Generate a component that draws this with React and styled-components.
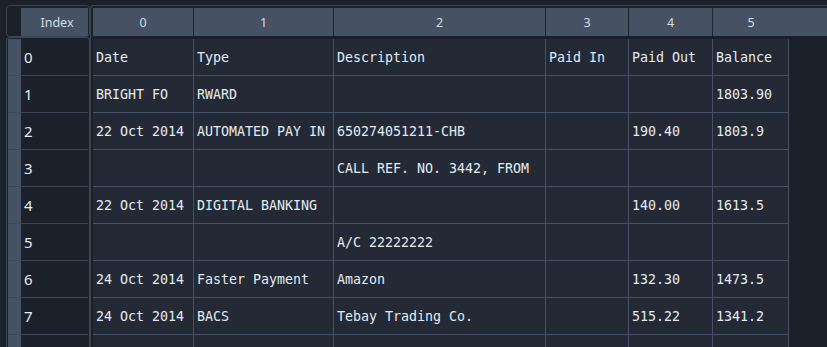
import React from "react"
import styled, { createGlobalStyle } from "styled-components"

const GlobalStyle = createGlobalStyle`
  html, body {
    margin: 0;
    padding: 0;
    background: #1b212b;
    overflow: hidden;
  }
`

const columns = [
  { label: "0", width: 101 },
  { label: "1", width: 140 },
  { label: "2", width: 212 },
  { label: "3", width: 83 },
  { label: "4", width: 84 },
  { label: "5", width: 76 },
]

const rows = [
  ["Date", "Type", "Description", "Paid In", "Paid Out", "Balance"],
  ["BRIGHT FO", "RWARD", "", "", "", "1803.90"],
  ["22 Oct 2014", "AUTOMATED PAY IN", "650274051211-CHB", "", "190.40", "1803.9"],
  ["", "", "CALL REF. NO. 3442, FROM", "", "", ""],
  ["22 Oct 2014", "DIGITAL BANKING", "", "", "140.00", "1613.5"],
  ["", "", "A/C 22222222", "", "", ""],
  ["24 Oct 2014", "Faster Payment", "Amazon", "", "132.30", "1473.5"],
  ["24 Oct 2014", "BACS", "Tebay Trading Co.", "", "515.22", "1341.2"],
  ["", "", "", "", "", ""],
]

// the last row only peeks in at the bottom edge, its number is out of view
const visibleIndexLabels = 8

const Page = styled.div`
  display: flex;
  padding: 5px 0 0 6px;
  height: 342px;
`

const LeftPanel = styled.div`
  display: flex;
  flex-direction: column;
  width: 84px;
  flex-shrink: 0;
`

const CornerBox = styled.div`
  box-sizing: border-box;
  height: 32px;
  border: 1px solid #3c4554;
  border-radius: 4px;
  padding: 2px 1px 0 14px;
`

const HeaderLabel = styled.div`
  height: 28px;
  padding-left: 5px;
  background: #465264;
  color: #d3dbe5;
  font-family: "Noto Sans", "Open Sans", sans-serif;
  font-size: 12.5px;
  display: flex;
  align-items: center;
  justify-content: center;
`

const IndexFrame = styled.div`
  box-sizing: border-box;
  flex: 1;
  border: 1px solid #3c4554;
  border-bottom: none;
  border-radius: 4px 4px 0 0;
  padding: 1px 1px 0 1px;
  overflow: hidden;
`

const IndexRow = styled.div`
  display: flex;
  height: 36px;
  border-bottom: 1px solid #3c4657;
`

const IndexStrip = styled.div`
  width: 13px;
  background: #465264;
`

const IndexCell = styled.div`
  flex: 1;
  display: flex;
  align-items: center;
  padding-left: 3px;
  color: #e6edf5;
  font-family: "Noto Sans", "Open Sans", sans-serif;
  font-size: 15px;
`

const RightPanel = styled.div`
  flex: 1;
  border-top: 1px solid #3c4554;
  border-left: 1px solid #3c4554;
  border-top-left-radius: 4px;
  padding: 2px 0 0 2px;
  overflow: hidden;
`

const HeaderRow = styled.div`
  display: flex;
  height: 28px;
  background: #465264;
  margin-bottom: 3px;
`

const HeaderSection = styled.div`
  box-sizing: border-box;
  width: ${p => p.$width}px;
  border-right: ${p => (p.$last ? "none" : "1px solid #1d232d")};
  color: #d3dbe5;
  font-family: "Noto Sans", "Open Sans", sans-serif;
  font-size: 12.5px;
  display: flex;
  align-items: center;
  justify-content: center;
`

const DataRow = styled.div`
  display: flex;
`

const DataCell = styled.div`
  box-sizing: border-box;
  width: ${p => p.$width}px;
  height: 37px;
  background: #232a35;
  border-right: 1px solid #465166;
  border-bottom: 1px solid #465166;
  padding-left: 3px;
  display: flex;
  align-items: center;
  white-space: nowrap;
  overflow: hidden;
  color: #e3eaf2;
  font-family: "DejaVu Sans Mono", "Liberation Mono", monospace;
  font-size: 13.3px;
`

export default function App() {
  return (
    <>
      <GlobalStyle />
      <Page>
        <LeftPanel>
          <CornerBox>
            <HeaderLabel>Index</HeaderLabel>
          </CornerBox>
          <IndexFrame>
            {rows.map((_, i) => (
              <IndexRow key={i}>
                <IndexStrip />
                <IndexCell>{i < visibleIndexLabels ? i : ""}</IndexCell>
              </IndexRow>
            ))}
          </IndexFrame>
        </LeftPanel>
        <RightPanel>
          <HeaderRow>
            {columns.map((c, j) => (
              <HeaderSection
                key={c.label}
                $width={c.width}
                $last={j === columns.length - 1}
              >
                {c.label}
              </HeaderSection>
            ))}
          </HeaderRow>
          {rows.map((row, i) => (
            <DataRow key={i}>
              {row.map((value, j) => (
                <DataCell key={j} $width={columns[j].width}>
                  {value}
                </DataCell>
              ))}
            </DataRow>
          ))}
        </RightPanel>
      </Page>
    </>
  )
}
